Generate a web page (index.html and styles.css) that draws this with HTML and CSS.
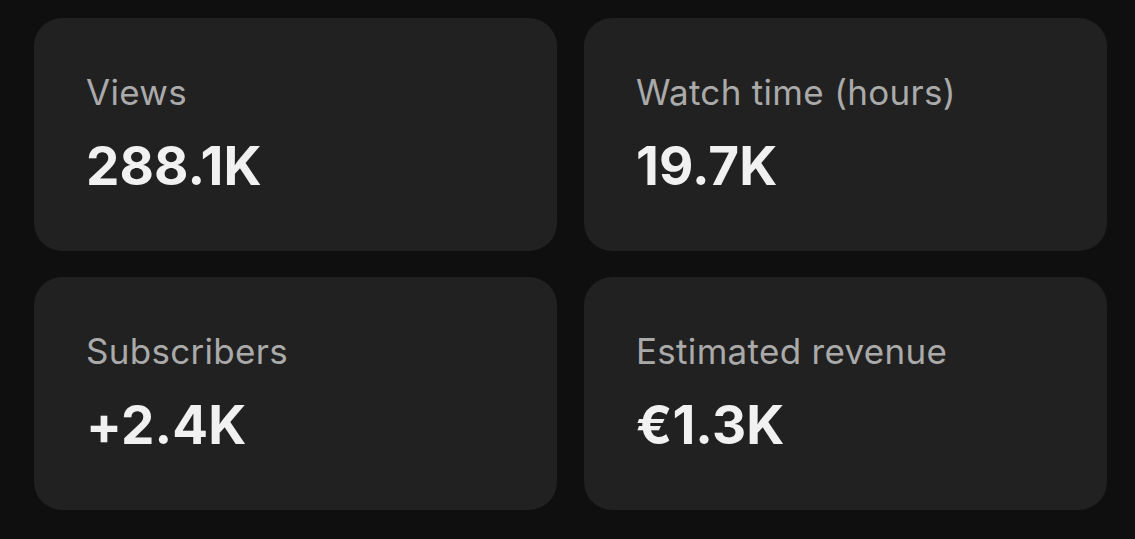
FILE: index.html
```html
<!DOCTYPE html>
<html>
<head>
<meta charset="utf-8">
<link rel="stylesheet" href="styles.css">
</head>
<body>
<div class="grid">
  <div class="card"><div class="label">Views</div><div class="value">288.1K</div></div>
  <div class="card"><div class="label">Watch time (hours)</div><div class="value">19.7K</div></div>
  <div class="card"><div class="label">Subscribers</div><div class="value">+2.4K</div></div>
  <div class="card"><div class="label">Estimated revenue</div><div class="value">€1.3K</div></div>
</div>
</body>
</html>
```
FILE: styles.css
```css
html, body { margin: 0; padding: 0; background: #0f0f0f; }
body { font-family: Inter, "Noto Sans", sans-serif; width: 1135px; height: 539px; overflow: hidden; }
.grid {
  display: grid;
  grid-template-columns: 523px 523px;
  grid-template-rows: 233px 233px;
  column-gap: 27px;
  row-gap: 26px;
  padding: 18px 0 0 34px;
}
.card {
  background: #212121;
  border-radius: 28px;
  padding: 0 0 0 52px;
  display: flex;
  flex-direction: column;
}
.label {
  color: #aaaaaa;
  font-size: 35px;
  font-weight: 400;
  line-height: 40px;
  margin-top: 54px;
  letter-spacing: 0.3px;
}
.value {
  color: #f1f1f1;
  font-size: 53px;
  font-weight: 700;
  line-height: 60px;
  margin-top: 24px;
  letter-spacing: 0.1px;
}
```
